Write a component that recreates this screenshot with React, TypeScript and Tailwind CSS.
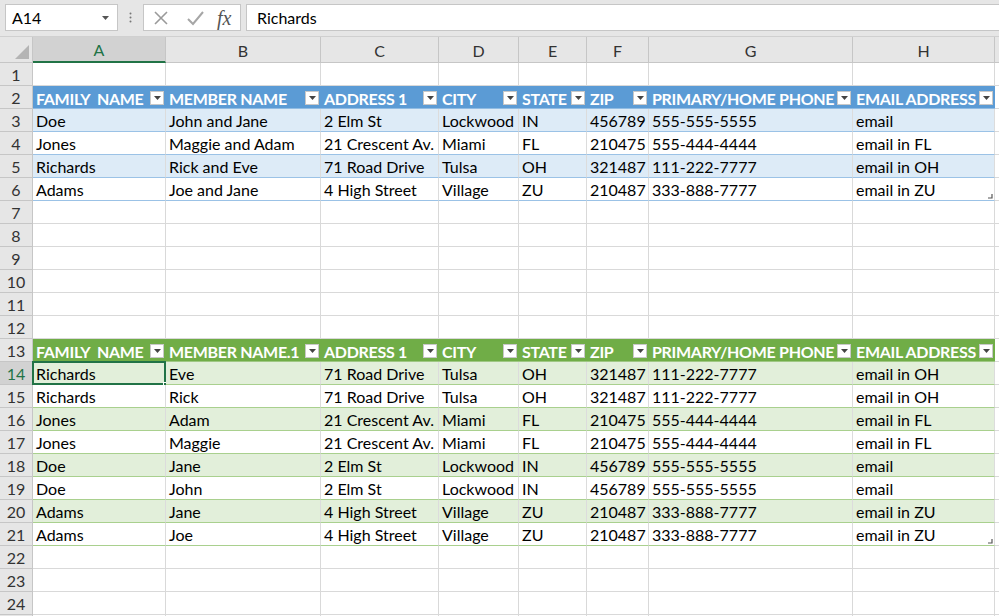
import React from 'react';

const COLS = [
  { key: 'A', w: 'w-[133px]' },
  { key: 'B', w: 'w-[155px]' },
  { key: 'C', w: 'w-[118px]' },
  { key: 'D', w: 'w-[80px]' },
  { key: 'E', w: 'w-[68px]' },
  { key: 'F', w: 'w-[62px]' },
  { key: 'G', w: 'w-[204px]' },
  { key: 'H', w: 'w-[142px]' },
];

const blueHeader = ['FAMILY  NAME', 'MEMBER NAME', 'ADDRESS 1', 'CITY', 'STATE', 'ZIP', 'PRIMARY/HOME PHONE', 'EMAIL ADDRESS'];
const greenHeader = ['FAMILY  NAME', 'MEMBER NAME.1', 'ADDRESS 1', 'CITY', 'STATE', 'ZIP', 'PRIMARY/HOME PHONE', 'EMAIL ADDRESS'];

const blueRows = [
  ['Doe', 'John and Jane', '2 Elm St', 'Lockwood', 'IN', '456789', '555-555-5555', 'email'],
  ['Jones', 'Maggie and Adam', '21 Crescent Av.', 'Miami', 'FL', '210475', '555-444-4444', 'email in FL'],
  ['Richards', 'Rick and Eve', '71 Road Drive', 'Tulsa', 'OH', '321487', '111-222-7777', 'email in OH'],
  ['Adams', 'Joe and Jane', '4 High Street', 'Village', 'ZU', '210487', '333-888-7777', 'email in ZU'],
];

const greenRows = [
  ['Richards', 'Eve', '71 Road Drive', 'Tulsa', 'OH', '321487', '111-222-7777', 'email in OH'],
  ['Richards', 'Rick', '71 Road Drive', 'Tulsa', 'OH', '321487', '111-222-7777', 'email in OH'],
  ['Jones', 'Adam', '21 Crescent Av.', 'Miami', 'FL', '210475', '555-444-4444', 'email in FL'],
  ['Jones', 'Maggie', '21 Crescent Av.', 'Miami', 'FL', '210475', '555-444-4444', 'email in FL'],
  ['Doe', 'Jane', '2 Elm St', 'Lockwood', 'IN', '456789', '555-555-5555', 'email'],
  ['Doe', 'John', '2 Elm St', 'Lockwood', 'IN', '456789', '555-555-5555', 'email'],
  ['Adams', 'Jane', '4 High Street', 'Village', 'ZU', '210487', '333-888-7777', 'email in ZU'],
  ['Adams', 'Joe', '4 High Street', 'Village', 'ZU', '210487', '333-888-7777', 'email in ZU'],
];

type Theme = 'blue' | 'green';

const theme = {
  blue: { head: 'bg-[#5b9bd5]', band: 'bg-[#ddebf7]', line: 'border-b-[#9bc2e6]' },
  green: { head: 'bg-[#70ad47]', band: 'bg-[#e2efda]', line: 'border-b-[#a9d08e]' },
};

function FilterButton() {
  return (
    <span className="absolute right-[2px] top-[5px] flex h-[14px] w-[14px] items-center justify-center border border-[#c8c8c8] bg-white">
      <svg width="7" height="4" viewBox="0 0 7 4">
        <path d="M0 0h7L3.5 4z" fill="#444" />
      </svg>
    </span>
  );
}

function RowHeader({ n, active }: { n?: number; active?: boolean }) {
  return (
    <div
      className={`flex h-full w-[33px] shrink-0 items-center justify-center border-r border-b border-[#c6c6c6] pt-[1px] ${
        active ? 'bg-[#d2d2d2] text-[#217346]' : 'bg-[#e6e6e6] text-[#333]'
      }`}
    >
      {n}
    </div>
  );
}

function EmptyRow({ n }: { n?: number }) {
  return (
    <div className="flex h-[23px]">
      <RowHeader n={n} />
      {COLS.map((c) => (
        <div key={c.key} className={`${c.w} shrink-0 border-r border-b border-[#d9d9d9] bg-white`} />
      ))}
      <div className="flex-1 border-b border-[#d9d9d9] bg-white" />
    </div>
  );
}

function HeaderRow({ n, labels, t }: { n: number; labels: string[]; t: Theme }) {
  return (
    <div className="flex h-[23px]">
      <RowHeader n={n} />
      {COLS.map((c, i) => (
        <div
          key={c.key}
          className={`${c.w} relative shrink-0 overflow-hidden whitespace-pre border-b border-[#ffffff55] ${theme[t].head} pl-[3px] pt-[1px] text-[16px] font-bold leading-[23px] tracking-[-0.3px] text-white`}
        >
          {labels[i]}
          <FilterButton />
        </div>
      ))}
      <div className="flex-1 border-b border-[#d9d9d9] bg-white" />
    </div>
  );
}

function DataRow({
  n,
  cells,
  t,
  banded,
  last,
  selected,
}: {
  n: number;
  cells: string[];
  t: Theme;
  banded: boolean;
  last?: boolean;
  selected?: boolean;
}) {
  return (
    <div className="flex h-[23px]">
      <RowHeader n={n} active={selected} />
      {COLS.map((c, i) => (
        <div
          key={c.key}
          className={`${c.w} relative shrink-0 whitespace-nowrap border-r border-b border-r-[#dcdcdc] ${theme[t].line} ${
            banded ? theme[t].band : 'bg-white'
          } px-[3px] pt-[1px] text-[16px] leading-[22px] text-black ${c.key === 'F' ? 'text-right' : ''}`}
        >
          {cells[i]}
          {selected && i === 0 && (
            <>
              <span className="pointer-events-none absolute -top-[1px] -left-[1px] -right-[1px] -bottom-[1px] border-2 border-[#217346]" />
              <span className="absolute -right-[4px] -bottom-[4px] h-[6px] w-[6px] border border-white bg-[#217346]" />
            </>
          )}
          {last && i === 7 && (
            <svg className="absolute right-[1px] bottom-[1px]" width="5" height="5" viewBox="0 0 5 5">
              <path d="M4 0v4H0" stroke="#555" strokeWidth="1.2" fill="none" />
            </svg>
          )}
        </div>
      ))}
      <div className="flex-1 border-b border-[#d9d9d9] bg-white" />
    </div>
  );
}

export default function App() {
  const rows: React.ReactNode[] = [];
  rows.push(<EmptyRow key={1} n={1} />);
  rows.push(<HeaderRow key={2} n={2} labels={blueHeader} t="blue" />);
  blueRows.forEach((r, i) =>
    rows.push(
      <DataRow key={3 + i} n={3 + i} cells={r} t="blue" banded={i % 2 === 0} last={i === blueRows.length - 1} />
    )
  );
  for (let n = 7; n <= 12; n++) rows.push(<EmptyRow key={n} n={n} />);
  rows.push(<HeaderRow key={13} n={13} labels={greenHeader} t="green" />);
  greenRows.forEach((r, i) =>
    rows.push(
      <DataRow
        key={14 + i}
        n={14 + i}
        cells={r}
        t="green"
        banded={i % 2 === 0}
        last={i === greenRows.length - 1}
        selected={i === 0}
      />
    )
  );
  for (let n = 22; n <= 24; n++) rows.push(<EmptyRow key={n} n={n} />);
  rows.push(<EmptyRow key={25} />);

  return (
    <div
      className="h-[616px] w-[999px] overflow-hidden bg-white text-[16px]"
      style={{ fontFamily: 'Lato, "Open Sans", sans-serif' }}
    >
      {/* formula bar */}
      <div className="flex h-[37px] items-start border-b border-[#d0d0d0] bg-[#e6e6e6] pt-[4px]">
        <div className="ml-[5px] flex h-[27px] w-[113px] items-center justify-between border border-[#c6c6c6] bg-white pl-[6px] pr-[8px]">
          <span className="text-[16px] text-black">A14</span>
          <svg width="7" height="4" viewBox="0 0 7 4">
            <path d="M0 0h7L3.5 4z" fill="#555" />
          </svg>
        </div>
        <div className="flex h-[27px] w-[25px] items-center justify-center">
          <svg width="3" height="11" viewBox="0 0 3 11">
            <circle cx="1.5" cy="1.5" r="1" fill="#777" />
            <circle cx="1.5" cy="5.5" r="1" fill="#777" />
            <circle cx="1.5" cy="9.5" r="1" fill="#777" />
          </svg>
        </div>
        <div className="flex h-[27px] w-[98px] items-center border border-[#c6c6c6] bg-white">
          <svg className="ml-[9px]" width="16" height="16" viewBox="0 0 16 16">
            <path d="M2 2l12 12M14 2L2 14" stroke="#9a9a9a" strokeWidth="1.6" />
          </svg>
          <svg className="ml-[17px]" width="18" height="16" viewBox="0 0 18 16">
            <path d="M2 9l5 5L17 2" stroke="#a6a6a6" strokeWidth="2" fill="none" />
          </svg>
          <span
            className="ml-[13px] text-[20px] italic leading-none text-[#555]"
            style={{ fontFamily: '"Liberation Serif", serif' }}
          >
            fx
          </span>
        </div>
        <div className="ml-[5px] flex h-[27px] flex-1 items-center border border-r-0 border-[#c6c6c6] bg-white pl-[10px]">
          <span className="text-[16px] text-black">Richards</span>
        </div>
      </div>

      {/* column headers */}
      <div className="flex h-[26px] bg-[#e6e6e6]">
        <div className="relative w-[33px] shrink-0 border-r border-b border-[#c6c6c6]">
          <svg className="absolute right-[3px] bottom-[3px]" width="14" height="14" viewBox="0 0 14 14">
            <path d="M14 0v14H0z" fill="#b4b4b4" />
          </svg>
        </div>
        {COLS.map((c) => (
          <div
            key={c.key}
            className={`${c.w} flex shrink-0 items-center justify-center border-r ${
              c.key === 'A'
                ? 'border-b-2 border-r-[#c6c6c6] border-b-[#217346] bg-[#d2d2d2] text-[#217346]'
                : 'border-b border-[#c6c6c6] text-[#333]'
            } pt-[2px] text-[16px]`}
          >
            {c.key}
          </div>
        ))}
        <div className="flex-1 border-b border-[#c6c6c6]" />
      </div>

      {rows}
    </div>
  );
}
